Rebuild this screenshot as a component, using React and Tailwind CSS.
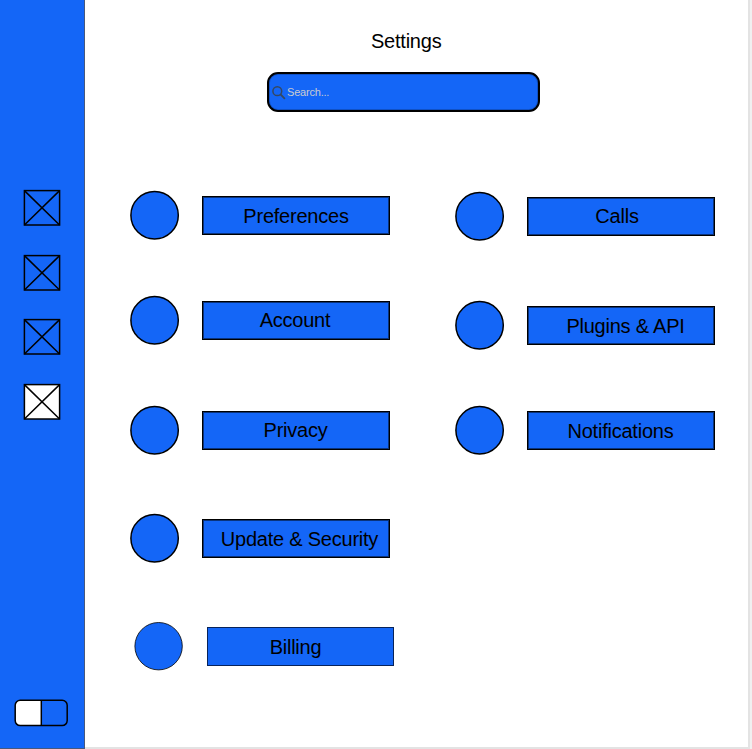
const CrossBox = ({ active }) => (
  <svg className="block h-[38px] w-[38px]" viewBox="0 0 38 38" stroke="#000" strokeWidth="1.5">
    <rect x="1.4" y="1.6" width="35.2" height="34.4" fill={active ? "#fff" : "#1466f7"} />
    <path d="M1.4 1.6L36.6 36M36.6 1.6L1.4 36" />
  </svg>
);

const left = [
  { label: "Preferences", row: "", text: "leading-[39px]" },
  { label: "Account", row: "mt-[55px]", text: "pr-[2px] leading-[37px]" },
  { label: "Privacy", row: "mt-[60px]", text: "pr-[1px] leading-[37px]" },
  { label: "Update & Security", row: "mt-[58px]", text: "pl-[7px] leading-[39px]" },
  { label: "Billing", row: "mt-[58px] ml-1", text: "pr-[10px] leading-[39px]", thin: true },
];

const right = [
  { label: "Calls", row: "", text: "pr-[8px] leading-[37px]" },
  { label: "Plugins & API", row: "mt-[59.4px]", text: "pl-[9px] leading-[39px]" },
  { label: "Notifications", row: "mt-[55px]", text: "pr-[1px] leading-[39px]" },
];

const Row = ({ item }) => (
  <div className={`flex h-[50px] items-center gap-[22px] ${item.row}`}>
    <svg className="block h-[50px] w-[50px] shrink-0" viewBox="0 0 50 50">
      <circle cx="24.6" cy="25.2" r="23.7" fill="#1466f7" stroke="#000" strokeWidth={item.thin ? 0.8 : 1.5} />
    </svg>
    <button
      className={`h-[39px] shrink-0 whitespace-nowrap border bg-[#1466f7] text-center text-[20px] tracking-[-0.23px] ${
        item.thin
          ? "ml-[1px] w-[187px] border-[#07235a]"
          : "w-[188px] border-black shadow-[inset_0_0_0_1px_rgba(0,0,0,0.5)]"
      } ${item.text}`}
    >
      {item.label}
    </button>
  </div>
);

export default function App() {
  return (
    <div className="flex h-[749px] w-[752px] overflow-hidden bg-white font-['Liberation_Sans',Arial,sans-serif] text-black">
      <aside className="flex h-[749px] w-[85px] shrink-0 flex-col border-b border-r border-b-[#46597f] border-r-[#46597f] bg-[#1466f7] pl-[23px] pt-[189px]">
        <nav className="flex flex-col gap-[26.5px]">
          <CrossBox />
          <CrossBox />
          <CrossBox />
          <CrossBox active />
        </nav>
        <svg className="-ml-[9px] mt-[278px] block h-[28px] w-[54px] shrink-0" viewBox="0 0 54 28" strokeWidth="1.5">
          <rect x="1.2" y="1.2" width="52" height="25.4" rx="5" fill="#1466f7" />
          <path d="M27 1.2H6.2a5 5 0 0 0-5 5V21.6a5 5 0 0 0 5 5H27Z" fill="#fff" />
          <rect x="1.2" y="1.2" width="52" height="25.4" rx="5" fill="none" stroke="#000" />
          <path d="M27.3 1.2V26.6" stroke="#000" />
        </svg>
      </aside>
      <main className="h-[749px] w-[663px] shrink-0 border-b-2 border-[#e3e3e3]">
        <h1 className="ml-[286px] pt-[26px] text-[20px] leading-[30px] tracking-[-0.23px]">Settings</h1>
        <div className="ml-[182px] mt-[16px] flex h-[40px] w-[273px] items-center rounded-[11px] border-2 border-black bg-[#1466f7] pl-[3px] shadow-[inset_0_0_0_1px_rgba(0,0,0,0.2)]">
          <svg className="h-[15px] w-[15px]" viewBox="0 0 15 15" fill="none" stroke="#36485f" strokeWidth="1.5">
            <circle cx="5.3" cy="6.2" r="4.4" />
            <path d="M8.5 9.4L12.9 13.8" strokeWidth="1.8" />
          </svg>
          <input
            className="w-[200px] bg-transparent text-[11px] leading-[14px] tracking-[-0.2px] outline-none placeholder:text-[#c9cbd0]"
            placeholder="Search..."
          />
        </div>
        <div className="flex pl-[45px]">
          <div className="mt-[78px] w-[325px] shrink-0">
            {left.map((item) => <Row key={item.label} item={item} />)}
          </div>
          <div className="mt-[79px] shrink-0">
            {right.map((item) => <Row key={item.label} item={item} />)}
          </div>
        </div>
      </main>
      <div className="h-[749px] w-[4px] shrink-0 border-l-2 border-[#e3e3e3] bg-[#f0f0f0]" />
    </div>
  );
}
